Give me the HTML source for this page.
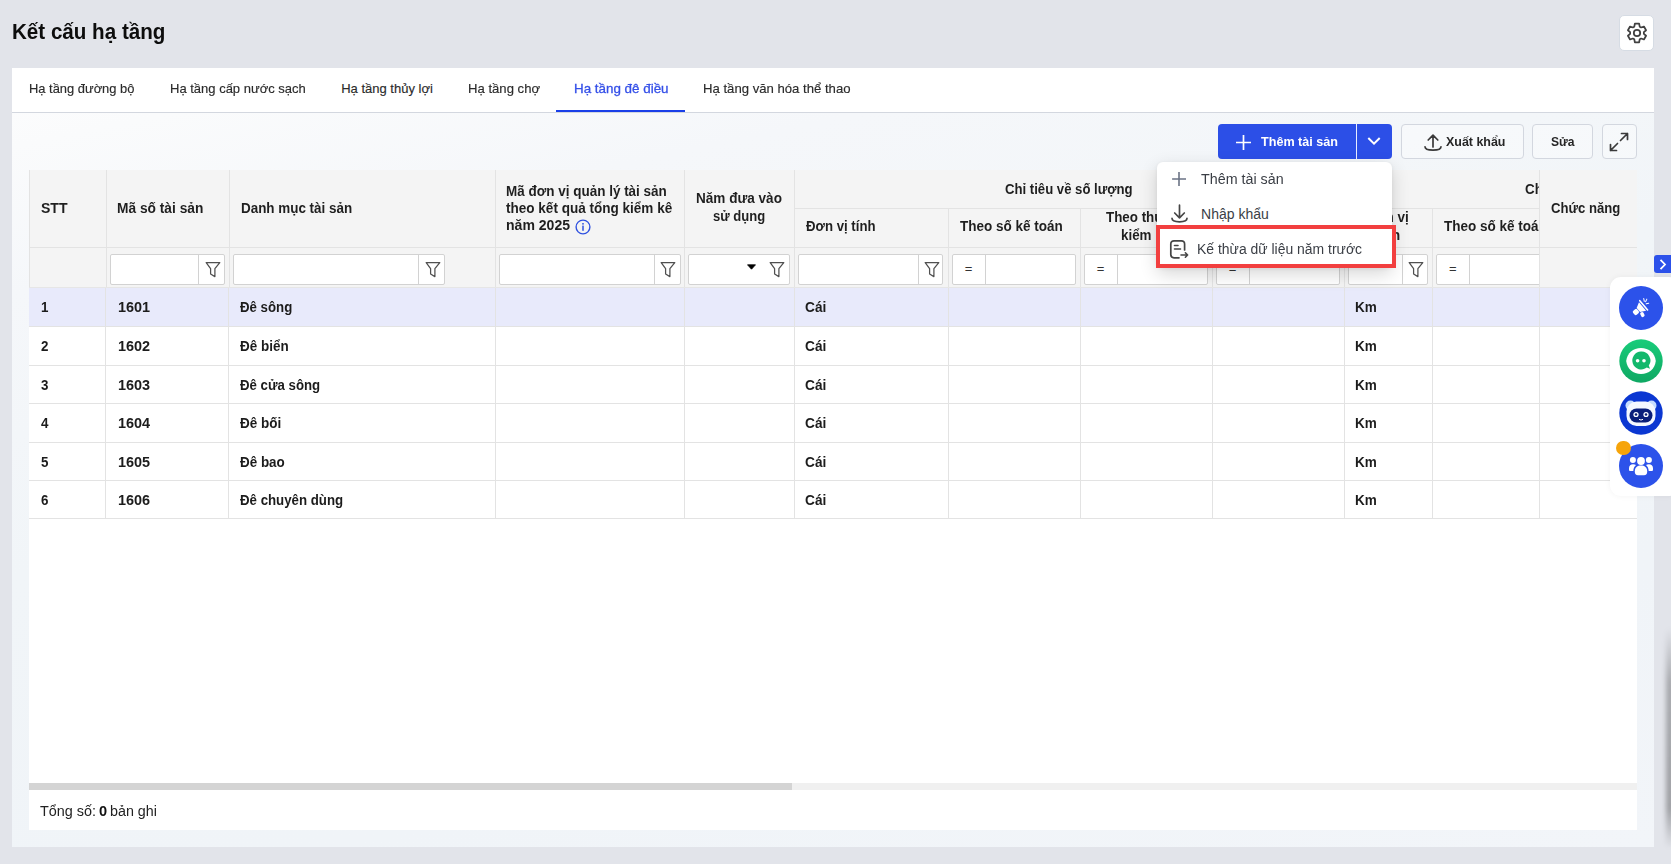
<!DOCTYPE html>
<html><head><meta charset="utf-8"><title>Kết cấu hạ tầng</title>
<style>
html,body{margin:0;padding:0;width:1671px;height:864px;overflow:hidden;}
body{position:relative;background:#e2e4ea;font-family:"Liberation Sans", sans-serif;}
#bg{position:absolute;left:0;top:0;width:1671px;height:864px;background:#e2e4ea;}
.m{position:absolute;white-space:nowrap;line-height:1;transform-origin:0 0;}
svg{position:absolute;}
</style></head><body>
<div id="bg"></div>
<span class="m" style="left:11.52px;top:21.38px;font-size:22px;font-weight:700;color:#0d0d0d;transform:scaleX(0.9362);">Kết cấu hạ tầng</span>
<div style="position:absolute;left:1619px;top:15px;width:34.5px;height:35.5px;background:#fff;border:1px solid #d6dce4;border-radius:5px;box-sizing:border-box"></div>
<svg style="left:1625px;top:21px" width="24" height="24" viewBox="0 0 24 24" fill="none" stroke="#404040" stroke-width="1.75" stroke-linejoin="round"><path d="M9.30 5.65 L9.86 2.74 L14.14 2.74 L14.70 5.65 L16.15 6.49 L18.95 5.52 L21.08 9.22 L18.85 11.16 L18.85 12.84 L21.08 14.78 L18.95 18.48 L16.15 17.51 L14.70 18.35 L14.14 21.26 L9.86 21.26 L9.30 18.35 L7.85 17.51 L5.05 18.48 L2.92 14.78 L5.15 12.84 L5.15 11.16 L2.92 9.22 L5.05 5.52 L7.85 6.49Z"/><circle cx="12" cy="12" r="3.2"/></svg>
<div style="position:absolute;left:12px;top:68px;width:1642px;height:779px;background:linear-gradient(168deg,#fdfdfe 0%,#fafbfc 7%,#f5f7fa 20%,#f1f5f8 45%,#f0f4f8 75%,#f2f5f9 100%);"></div>
<div style="position:absolute;left:12px;top:68px;width:1642px;height:44px;background:#fff;"></div>
<div style="position:absolute;left:12px;top:112px;width:1642px;height:1px;background:#d3d7df;"></div>
<span class="m" style="left:29.48px;top:82.00px;font-size:13px;font-weight:400;color:#2b2b2b;transform:scaleX(0.9934);-webkit-text-stroke:0.15px #2b2b2b;">Hạ tầng đường bộ</span>
<span class="m" style="left:170.28px;top:82.00px;font-size:13px;font-weight:400;color:#2b2b2b;transform:scaleX(0.9999);-webkit-text-stroke:0.15px #2b2b2b;">Hạ tầng cấp nước sạch</span>
<span class="m" style="left:341.18px;top:82.00px;font-size:13px;font-weight:400;color:#2b2b2b;transform:scaleX(1.0000);-webkit-text-stroke:0.15px #2b2b2b;">Hạ tầng thủy lợi</span>
<span class="m" style="left:467.68px;top:82.00px;font-size:13px;font-weight:400;color:#2b2b2b;transform:scaleX(1.0089);-webkit-text-stroke:0.15px #2b2b2b;">Hạ tầng chợ</span>
<span class="m" style="left:573.98px;top:82.00px;font-size:13px;font-weight:400;color:#3550e8;transform:scaleX(1.0299);-webkit-text-stroke:0.3px #3550e8;">Hạ tầng đê điều</span>
<span class="m" style="left:702.98px;top:82.00px;font-size:13px;font-weight:400;color:#2b2b2b;transform:scaleX(1.0104);-webkit-text-stroke:0.15px #2b2b2b;">Hạ tầng văn hóa thể thao</span>
<div style="position:absolute;left:556px;top:110px;width:129px;height:2px;background:#1a3fe8;"></div>
<div style="position:absolute;left:29px;top:170px;width:1608px;height:660px;background:#fff;"></div>
<div style="position:absolute;left:29px;top:170px;width:1608px;height:117px;background:#f4f4f4;"></div>
<div style="position:absolute;left:29px;top:170px;width:1px;height:117px;background:#e3e3e3;"></div>
<div style="position:absolute;left:29px;top:247px;width:1608px;height:1px;background:#e3e3e3;"></div>
<div style="position:absolute;left:795px;top:208px;width:744px;height:1px;background:#e3e3e3;"></div>
<div style="position:absolute;left:29px;top:287px;width:1608px;height:1px;background:#e6e6e6;"></div>
<div style="position:absolute;left:106px;top:170px;width:1px;height:117px;background:#e3e3e3;"></div>
<div style="position:absolute;left:229px;top:170px;width:1px;height:117px;background:#e3e3e3;"></div>
<div style="position:absolute;left:495px;top:170px;width:1px;height:117px;background:#e3e3e3;"></div>
<div style="position:absolute;left:684px;top:170px;width:1px;height:117px;background:#e3e3e3;"></div>
<div style="position:absolute;left:794px;top:170px;width:1px;height:117px;background:#e3e3e3;"></div>
<div style="position:absolute;left:1344px;top:170px;width:1px;height:117px;background:#e3e3e3;"></div>
<div style="position:absolute;left:1539px;top:170px;width:1px;height:117px;background:#e3e3e3;"></div>
<div style="position:absolute;left:948px;top:208px;width:1px;height:79px;background:#e3e3e3;"></div>
<div style="position:absolute;left:1080px;top:208px;width:1px;height:79px;background:#e3e3e3;"></div>
<div style="position:absolute;left:1212px;top:208px;width:1px;height:79px;background:#e3e3e3;"></div>
<div style="position:absolute;left:1432px;top:208px;width:1px;height:79px;background:#e3e3e3;"></div>
<div style="position:absolute;left:29px;top:287.5px;width:1608px;height:38.5px;background:#e8eafb;"></div>
<div style="position:absolute;left:29px;top:326px;width:1608px;height:1px;background:#e3e3e3;"></div>
<div style="position:absolute;left:29px;top:365px;width:1608px;height:1px;background:#e3e3e3;"></div>
<div style="position:absolute;left:29px;top:403px;width:1608px;height:1px;background:#e3e3e3;"></div>
<div style="position:absolute;left:29px;top:442px;width:1608px;height:1px;background:#e3e3e3;"></div>
<div style="position:absolute;left:29px;top:480px;width:1608px;height:1px;background:#e3e3e3;"></div>
<div style="position:absolute;left:29px;top:518px;width:1608px;height:1px;background:#e3e3e3;"></div>
<div style="position:absolute;left:105px;top:288px;width:1px;height:230px;background:#e3e3e3;"></div>
<div style="position:absolute;left:228px;top:288px;width:1px;height:230px;background:#e3e3e3;"></div>
<div style="position:absolute;left:495px;top:288px;width:1px;height:230px;background:#e3e3e3;"></div>
<div style="position:absolute;left:684px;top:288px;width:1px;height:230px;background:#e3e3e3;"></div>
<div style="position:absolute;left:794px;top:288px;width:1px;height:230px;background:#e3e3e3;"></div>
<div style="position:absolute;left:948px;top:288px;width:1px;height:230px;background:#e3e3e3;"></div>
<div style="position:absolute;left:1080px;top:288px;width:1px;height:230px;background:#e3e3e3;"></div>
<div style="position:absolute;left:1212px;top:288px;width:1px;height:230px;background:#e3e3e3;"></div>
<div style="position:absolute;left:1344px;top:288px;width:1px;height:230px;background:#e3e3e3;"></div>
<div style="position:absolute;left:1432px;top:288px;width:1px;height:230px;background:#e3e3e3;"></div>
<div style="position:absolute;left:1539px;top:288px;width:1px;height:230px;background:#e3e3e3;"></div>
<span class="m" style="left:41.04px;top:201.15px;font-size:14px;font-weight:700;color:#1f1f1f;transform:scaleX(1.0025);">STT</span>
<span class="m" style="left:117.44px;top:200.95px;font-size:14px;font-weight:700;color:#1f1f1f;transform:scaleX(0.9818);">Mã số tài sản</span>
<span class="m" style="left:240.74px;top:200.95px;font-size:14px;font-weight:700;color:#1f1f1f;transform:scaleX(0.9586);">Danh mục tài sản</span>
<span class="m" style="left:506.34px;top:183.55px;font-size:14px;font-weight:700;color:#1f1f1f;transform:scaleX(0.9624);">Mã đơn vị quản lý tài sản</span>
<span class="m" style="left:506.34px;top:200.55px;font-size:14px;font-weight:700;color:#1f1f1f;transform:scaleX(0.9667);">theo kết quả tổng kiểm kê</span>
<span class="m" style="left:506.34px;top:217.95px;font-size:14px;font-weight:700;color:#1f1f1f;transform:scaleX(1.0030);">năm 2025</span>
<svg style="left:575px;top:218.5px" width="16" height="16" viewBox="0 0 16 16"><circle cx="8" cy="8" r="6.9" fill="none" stroke="#2f51e0" stroke-width="1.4"/><rect x="7.25" y="6.6" width="1.5" height="5.2" fill="#2f51e0"/><rect x="7.25" y="4" width="1.5" height="1.6" fill="#2f51e0"/></svg>
<span class="m" style="left:696.14px;top:191.45px;font-size:14px;font-weight:700;color:#1f1f1f;transform:scaleX(0.9683);">Năm đưa vào</span>
<span class="m" style="left:713.14px;top:208.75px;font-size:14px;font-weight:700;color:#1f1f1f;transform:scaleX(0.9320);">sử dụng</span>
<span class="m" style="left:1005.34px;top:182.35px;font-size:14px;font-weight:700;color:#1f1f1f;transform:scaleX(0.9384);">Chỉ tiêu về số lượng</span>
<span class="m" style="left:805.54px;top:219.35px;font-size:14px;font-weight:700;color:#1f1f1f;transform:scaleX(0.9428);">Đơn vị tính</span>
<span class="m" style="left:959.64px;top:219.35px;font-size:14px;font-weight:700;color:#1f1f1f;transform:scaleX(0.9647);">Theo số kế toán</span>
<span class="m" style="left:1105.74px;top:209.75px;font-size:14px;font-weight:700;color:#1f1f1f;transform:scaleX(0.955);">Theo thực tế</span>
<span class="m" style="left:1121.04px;top:227.65px;font-size:14px;font-weight:700;color:#1f1f1f;transform:scaleX(0.955);">kiểm kê</span>
<span class="m" style="left:1233.44px;top:209.75px;font-size:14px;font-weight:700;color:#1f1f1f;transform:scaleX(0.955);">Chênh lệch</span>
<span class="m" style="left:1366.44px;top:210.45px;font-size:14px;font-weight:700;color:#1f1f1f;transform:scaleX(0.9668);">Đơn vị</span>
<span class="m" style="left:1374.44px;top:227.75px;font-size:14px;font-weight:700;color:#1f1f1f;transform:scaleX(1.0181);">tính</span>
<div style="position:absolute;left:1433px;top:171px;width:106px;height:76px;overflow:hidden">
<span class="m" style="left:91.94px;top:10.75px;font-size:14px;font-weight:700;color:#1f1f1f;transform:scaleX(0.955);">Chỉ tiêu về giá trị</span>
<span class="m" style="left:10.54px;top:48.15px;font-size:14px;font-weight:700;color:#1f1f1f;transform:scaleX(0.9647);">Theo số kế toán</span>
</div>
<span class="m" style="left:1550.64px;top:200.55px;font-size:14px;font-weight:700;color:#1f1f1f;transform:scaleX(0.9364);">Chức năng</span>
<div style="position:absolute;left:110.2px;top:254.2px;width:115.3px;height:30.4px;background:#fff;border:1px solid #d2d2d2;border-radius:2px;box-sizing:border-box;"></div>
<div style="position:absolute;left:198.4px;top:254.2px;width:1px;height:30.4px;background:#d2d2d2;"></div>
<svg style="left:204.95px;top:260.8px" width="16" height="17" viewBox="0 0 16 17"><path d="M1.2 1.6H14.8L9.9 7.6V15.6L5.6 13V7.6Z" fill="none" stroke="#505050" stroke-width="1.25" stroke-linejoin="round"/></svg>
<div style="position:absolute;left:232.8px;top:254.2px;width:212.0px;height:30.4px;background:#fff;border:1px solid #d2d2d2;border-radius:2px;box-sizing:border-box;"></div>
<div style="position:absolute;left:418.3px;top:254.2px;width:1px;height:30.4px;background:#d2d2d2;"></div>
<svg style="left:424.55px;top:260.8px" width="16" height="17" viewBox="0 0 16 17"><path d="M1.2 1.6H14.8L9.9 7.6V15.6L5.6 13V7.6Z" fill="none" stroke="#505050" stroke-width="1.25" stroke-linejoin="round"/></svg>
<div style="position:absolute;left:499px;top:254.2px;width:181.5px;height:30.4px;background:#fff;border:1px solid #d2d2d2;border-radius:2px;box-sizing:border-box;"></div>
<div style="position:absolute;left:654px;top:254.2px;width:1px;height:30.4px;background:#d2d2d2;"></div>
<svg style="left:660.25px;top:260.8px" width="16" height="17" viewBox="0 0 16 17"><path d="M1.2 1.6H14.8L9.9 7.6V15.6L5.6 13V7.6Z" fill="none" stroke="#505050" stroke-width="1.25" stroke-linejoin="round"/></svg>
<div style="position:absolute;left:688px;top:254.2px;width:101.5px;height:30.4px;background:#fff;border:1px solid #d2d2d2;border-radius:2px;box-sizing:border-box;"></div>
<svg style="left:747px;top:264px" width="9" height="6" viewBox="0 0 9 6"><path d="M0.5 0.8H8.5L4.5 5.2Z" fill="#000" stroke="#000" stroke-width="0.8" stroke-linejoin="round"/></svg>
<svg style="left:768.5px;top:260.8px" width="16" height="17" viewBox="0 0 16 17"><path d="M1.2 1.6H14.8L9.9 7.6V15.6L5.6 13V7.6Z" fill="none" stroke="#505050" stroke-width="1.25" stroke-linejoin="round"/></svg>
<div style="position:absolute;left:797.6px;top:254.2px;width:145.89999999999998px;height:30.4px;background:#fff;border:1px solid #d2d2d2;border-radius:2px;box-sizing:border-box;"></div>
<div style="position:absolute;left:917.7px;top:254.2px;width:1px;height:30.4px;background:#d2d2d2;"></div>
<svg style="left:923.6px;top:260.8px" width="16" height="17" viewBox="0 0 16 17"><path d="M1.2 1.6H14.8L9.9 7.6V15.6L5.6 13V7.6Z" fill="none" stroke="#505050" stroke-width="1.25" stroke-linejoin="round"/></svg>
<div style="position:absolute;left:952.2px;top:254.2px;width:123.5px;height:30.4px;background:#fff;border:1px solid #d2d2d2;border-radius:2px;box-sizing:border-box;"></div>
<div style="position:absolute;left:985.4px;top:254.2px;width:1px;height:30.4px;background:#d2d2d2;"></div>
<span class="m" style="left:964.78px;top:261.80px;font-size:13px;font-weight:400;color:#333;">=</span>
<div style="position:absolute;left:1084.2px;top:254.2px;width:123.5px;height:30.4px;background:#fff;border:1px solid #d2d2d2;border-radius:2px;box-sizing:border-box;"></div>
<div style="position:absolute;left:1117.4px;top:254.2px;width:1px;height:30.4px;background:#d2d2d2;"></div>
<span class="m" style="left:1096.78px;top:261.80px;font-size:13px;font-weight:400;color:#333;">=</span>
<div style="position:absolute;left:1216.2px;top:254.2px;width:123.5px;height:30.4px;background:#fff;border:1px solid #d2d2d2;border-radius:2px;box-sizing:border-box;"></div>
<div style="position:absolute;left:1249.4px;top:254.2px;width:1px;height:30.4px;background:#d2d2d2;"></div>
<span class="m" style="left:1228.78px;top:261.80px;font-size:13px;font-weight:400;color:#333;">=</span>
<div style="position:absolute;left:1348.2px;top:254.2px;width:79.79999999999995px;height:30.4px;background:#fff;border:1px solid #d2d2d2;border-radius:2px;box-sizing:border-box;"></div>
<div style="position:absolute;left:1402px;top:254.2px;width:1px;height:30.4px;background:#d2d2d2;"></div>
<svg style="left:1408.0px;top:260.8px" width="16" height="17" viewBox="0 0 16 17"><path d="M1.2 1.6H14.8L9.9 7.6V15.6L5.6 13V7.6Z" fill="none" stroke="#505050" stroke-width="1.25" stroke-linejoin="round"/></svg>
<div style="position:absolute;left:1433px;top:250px;width:106px;height:37px;overflow:hidden">
<div style="position:absolute;left:3.2px;top:4.2px;width:130px;height:30.4px;background:#fff;border:1px solid #d2d2d2;border-radius:2px;box-sizing:border-box;"></div>
<div style="position:absolute;left:36.4px;top:4.2px;width:1px;height:30.4px;background:#d2d2d2"></div>
<span class="m" style="left:15.98px;top:11.80px;font-size:13px;font-weight:400;color:#333;">=</span>
</div>
<span class="m" style="left:40.94px;top:299.95px;font-size:14px;font-weight:700;color:#1c1c1c;transform:scaleX(0.955);">1</span>
<span class="m" style="left:117.64px;top:299.95px;font-size:14px;font-weight:700;color:#1c1c1c;transform:scaleX(1.0309);">1601</span>
<span class="m" style="left:240.04px;top:299.95px;font-size:14px;font-weight:700;color:#1c1c1c;transform:scaleX(0.9454);">Đê sông</span>
<span class="m" style="left:805.44px;top:299.95px;font-size:14px;font-weight:700;color:#1c1c1c;transform:scaleX(0.9781);">Cái</span>
<span class="m" style="left:1355.14px;top:299.95px;font-size:14px;font-weight:700;color:#1c1c1c;transform:scaleX(0.9671);">Km</span>
<span class="m" style="left:40.94px;top:338.85px;font-size:14px;font-weight:700;color:#1c1c1c;transform:scaleX(0.955);">2</span>
<span class="m" style="left:117.64px;top:338.85px;font-size:14px;font-weight:700;color:#1c1c1c;transform:scaleX(1.0309);">1602</span>
<span class="m" style="left:240.04px;top:338.85px;font-size:14px;font-weight:700;color:#1c1c1c;transform:scaleX(0.9613);">Đê biển</span>
<span class="m" style="left:805.44px;top:338.85px;font-size:14px;font-weight:700;color:#1c1c1c;transform:scaleX(0.9781);">Cái</span>
<span class="m" style="left:1355.14px;top:338.85px;font-size:14px;font-weight:700;color:#1c1c1c;transform:scaleX(0.9671);">Km</span>
<span class="m" style="left:40.94px;top:377.85px;font-size:14px;font-weight:700;color:#1c1c1c;transform:scaleX(0.955);">3</span>
<span class="m" style="left:117.64px;top:377.85px;font-size:14px;font-weight:700;color:#1c1c1c;transform:scaleX(1.0309);">1603</span>
<span class="m" style="left:240.04px;top:377.85px;font-size:14px;font-weight:700;color:#1c1c1c;transform:scaleX(0.9445);">Đê cửa sông</span>
<span class="m" style="left:805.44px;top:377.85px;font-size:14px;font-weight:700;color:#1c1c1c;transform:scaleX(0.9781);">Cái</span>
<span class="m" style="left:1355.14px;top:377.85px;font-size:14px;font-weight:700;color:#1c1c1c;transform:scaleX(0.9671);">Km</span>
<span class="m" style="left:40.94px;top:416.35px;font-size:14px;font-weight:700;color:#1c1c1c;transform:scaleX(0.955);">4</span>
<span class="m" style="left:117.64px;top:416.35px;font-size:14px;font-weight:700;color:#1c1c1c;transform:scaleX(1.0309);">1604</span>
<span class="m" style="left:240.04px;top:416.35px;font-size:14px;font-weight:700;color:#1c1c1c;transform:scaleX(0.9635);">Đê bối</span>
<span class="m" style="left:805.44px;top:416.35px;font-size:14px;font-weight:700;color:#1c1c1c;transform:scaleX(0.9781);">Cái</span>
<span class="m" style="left:1355.14px;top:416.35px;font-size:14px;font-weight:700;color:#1c1c1c;transform:scaleX(0.9671);">Km</span>
<span class="m" style="left:40.94px;top:454.95px;font-size:14px;font-weight:700;color:#1c1c1c;transform:scaleX(0.955);">5</span>
<span class="m" style="left:117.64px;top:454.95px;font-size:14px;font-weight:700;color:#1c1c1c;transform:scaleX(1.0309);">1605</span>
<span class="m" style="left:240.04px;top:454.95px;font-size:14px;font-weight:700;color:#1c1c1c;transform:scaleX(0.9600);">Đê bao</span>
<span class="m" style="left:805.44px;top:454.95px;font-size:14px;font-weight:700;color:#1c1c1c;transform:scaleX(0.9781);">Cái</span>
<span class="m" style="left:1355.14px;top:454.95px;font-size:14px;font-weight:700;color:#1c1c1c;transform:scaleX(0.9671);">Km</span>
<span class="m" style="left:40.94px;top:493.15px;font-size:14px;font-weight:700;color:#1c1c1c;transform:scaleX(0.955);">6</span>
<span class="m" style="left:117.64px;top:493.15px;font-size:14px;font-weight:700;color:#1c1c1c;transform:scaleX(1.0309);">1606</span>
<span class="m" style="left:240.04px;top:493.15px;font-size:14px;font-weight:700;color:#1c1c1c;transform:scaleX(0.9469);">Đê chuyên dùng</span>
<span class="m" style="left:805.44px;top:493.15px;font-size:14px;font-weight:700;color:#1c1c1c;transform:scaleX(0.9781);">Cái</span>
<span class="m" style="left:1355.14px;top:493.15px;font-size:14px;font-weight:700;color:#1c1c1c;transform:scaleX(0.9671);">Km</span>
<div style="position:absolute;left:29px;top:783px;width:1608px;height:7px;background:#f0f0f0;"></div>
<div style="position:absolute;left:29px;top:783px;width:763px;height:7px;background:#d4d4d4;"></div>
<span class="m" style="left:39.84px;top:803.85px;font-size:14px;font-weight:400;color:#222;transform:scaleX(1.0282);">Tổng số:</span>
<span class="m" style="left:99.04px;top:803.85px;font-size:14px;font-weight:700;color:#111;transform:scaleX(1.0414);">0</span>
<span class="m" style="left:110.34px;top:803.85px;font-size:14px;font-weight:400;color:#222;transform:scaleX(1.0214);">bản ghi</span>
<div style="position:absolute;left:1218px;top:124px;width:174px;height:35px;background:#2c4fe7;border-radius:4px;"></div>
<div style="position:absolute;left:1356px;top:124px;width:1.2px;height:35px;background:#e8ecff;"></div>
<svg style="left:1235px;top:133.5px" width="17" height="17" viewBox="0 0 17 17"><path d="M8.5 1V16M1 8.5H16" stroke="#fff" stroke-width="1.7"/></svg>
<span class="m" style="left:1261.48px;top:135.00px;font-size:13px;font-weight:700;color:#fff;transform:scaleX(0.9694);">Thêm tài sản</span>
<svg style="left:1367px;top:136px" width="14" height="10" viewBox="0 0 14 10"><path d="M1.3 2L7 7.7 12.7 2" fill="none" stroke="#fff" stroke-width="2"/></svg>
<div style="position:absolute;left:1401.3px;top:124.2px;width:122.4px;height:34.6px;border:1px solid #d3d7df;border-radius:4px;box-sizing:border-box;background:rgba(255,255,255,0.35);"></div>
<div style="position:absolute;left:1532.3px;top:124.2px;width:60.5px;height:34.6px;border:1px solid #d3d7df;border-radius:4px;box-sizing:border-box;background:rgba(255,255,255,0.35);"></div>
<div style="position:absolute;left:1602.2px;top:124.2px;width:34.4px;height:34.6px;border:1px solid #d3d7df;border-radius:4px;box-sizing:border-box;background:rgba(255,255,255,0.35);"></div>
<svg style="left:1423px;top:132.5px" width="20" height="19" viewBox="0 0 20 19"><path d="M10 14V2.3M5.2 7 10 2.2 14.8 7M2 13.8C2 18.3 18 18.3 18 13.8" fill="none" stroke="#3a3a3a" stroke-width="1.7" stroke-linecap="round" stroke-linejoin="round"/></svg>
<span class="m" style="left:1446.08px;top:135.00px;font-size:13px;font-weight:700;color:#262626;transform:scaleX(0.9568);">Xuất khẩu</span>
<span class="m" style="left:1550.78px;top:135.00px;font-size:13px;font-weight:700;color:#262626;transform:scaleX(0.9294);">Sửa</span>
<svg style="left:1608px;top:131px" width="22" height="22" viewBox="0 0 22 22"><path d="M12.5 9.5 19.5 2.5M13.5 2.5H19.5V8.5M9.5 12.5 2.5 19.5M2.5 13.5V19.5H8.5" fill="none" stroke="#3a3a3a" stroke-width="1.7" stroke-linecap="round" stroke-linejoin="round"/></svg>
<div style="position:absolute;left:1156.7px;top:161.7px;width:235.3px;height:106px;background:#fff;border-radius:6px;box-shadow:0 6px 18px rgba(0,0,0,0.16),0 1px 4px rgba(0,0,0,0.06);"></div>
<svg style="left:1171px;top:171px" width="16" height="16" viewBox="0 0 16 16"><path d="M8 1.1V15M1.1 8H15" stroke="#6b7385" stroke-width="1.6"/></svg>
<span class="m" style="left:1200.64px;top:172.25px;font-size:14px;font-weight:400;color:#3a3e45;transform:scaleX(1.0208);">Thêm tài sản</span>
<svg style="left:1169.5px;top:204px" width="19" height="20" viewBox="0 0 19 20"><path d="M9.5 1.2V13.8M4.7 9 9.5 13.8 14.3 9M2 14.3C2 19 17 19 17 14.3" fill="none" stroke="#454545" stroke-width="1.7" stroke-linecap="round" stroke-linejoin="round"/></svg>
<span class="m" style="left:1201.04px;top:207.25px;font-size:14px;font-weight:400;color:#3a3e45;transform:scaleX(1.0000);">Nhập khẩu</span>
<svg style="left:1169px;top:239px" width="21" height="21" viewBox="0 0 21 21"><path d="M15.6 11V5C15.6 3 14.4 1.8 12.4 1.8H5C3 1.8 1.8 3 1.8 5V15.6C1.8 17.6 3 18.8 5 18.8H10" fill="none" stroke="#454545" stroke-width="1.7" stroke-linecap="round"/><path d="M5.5 6.5H9M5.5 10H11.5M12 16H18.6M16.4 13.8 18.6 16 16.4 18.2" fill="none" stroke="#454545" stroke-width="1.6" stroke-linecap="round" stroke-linejoin="round"/></svg>
<span class="m" style="left:1196.54px;top:242.15px;font-size:14px;font-weight:400;color:#3a3e45;transform:scaleX(0.9959);">Kế thừa dữ liệu năm trước</span>
<div style="position:absolute;left:1156px;top:225px;width:240px;height:43px;border:4px solid #f23f3f;box-sizing:border-box;"></div>
<div style="position:absolute;left:1654px;top:255px;width:17px;height:17.7px;background:#2c51ea;border-radius:3px 0 0 3px;"></div>
<svg style="left:1658px;top:257.5px" width="10" height="13" viewBox="0 0 10 13"><path d="M2.5 1.8 7 6.5 2.5 11.2" fill="none" stroke="#fff" stroke-width="1.8"/></svg>
<div style="position:absolute;left:1610.4px;top:277px;width:70px;height:219px;background:#fff;border-radius:11px;box-shadow:0 0 6px rgba(0,0,0,0.05);"></div>
<svg style="left:1619px;top:286px" width="44" height="44" viewBox="0 0 44 44"><circle cx="22" cy="22" r="22" fill="#2c52ea"/>
<g transform="translate(21.3 21.7) scale(0.8) translate(-22 -22)">
<g transform="translate(21.5 23) rotate(-40)" fill="#fff">
<rect x="-10" y="-3.2" width="6.8" height="6.6" rx="2"/>
<path d="M-2.6 -3.2 L4.2 -6.8 L4.2 7 L-2.6 3.4Z"/>
<rect x="5.2" y="-8.6" width="2" height="17.2" rx="1"/>
<rect x="-4" y="4.6" width="4.4" height="6.4" rx="2" transform="rotate(12 -2 4.6)"/>
</g>
<path d="M26.3 10.5 27 14M30.2 11.3 28.6 14.6M32.5 16.4 29.4 17.2" stroke="#fff" stroke-width="1.3" stroke-linecap="round"/>
</g>
</svg>
<svg style="left:1619px;top:339px" width="44" height="44" viewBox="0 0 44 44"><defs><linearGradient id="gg" x1="0" y1="0" x2="0" y2="1"><stop offset="0" stop-color="#19cc7a"/><stop offset="1" stop-color="#0fa863"/></linearGradient></defs>
<circle cx="22" cy="22" r="21.7" fill="url(#gg)"/>
<path d="M7.2 22C8.3 13.8 14 9 22 9C30 9 35.7 13.8 36.8 22C35.7 30.2 30 35 22 35C14 35 8.3 30.2 7.2 22Z" fill="#fff"/>
<path d="M22 12.5A9 9 0 1 0 27.8 28.6L31 29.8 29.8 26.6A9 9 0 0 0 22 12.5Z" fill="#13b86c"/>
<circle cx="18.6" cy="21.8" r="1.8" fill="#fff"/><circle cx="25" cy="21.8" r="1.8" fill="#fff"/>
</svg>
<svg style="left:1619px;top:391px" width="44" height="44" viewBox="0 0 44 44"><circle cx="22" cy="22" r="21.7" fill="#0b37d2"/>
<circle cx="11.5" cy="14.5" r="5" fill="#c5dcff"/><circle cx="32.5" cy="14.5" r="5" fill="#c5dcff"/>
<rect x="7.5" y="10.5" width="29" height="24.5" rx="10" fill="#f4f8ff"/>
<rect x="10.5" y="17.5" width="23" height="14" rx="7" fill="#0a1f7a"/>
<circle cx="17" cy="23.5" r="2.6" fill="#fff"/><circle cx="27" cy="23.5" r="2.6" fill="#fff"/>
<circle cx="17" cy="23.5" r="1.3" fill="#0a1f7a"/><circle cx="27" cy="23.5" r="1.3" fill="#0a1f7a"/>
<path d="M20 28.3Q22 29.8 24 28.3" stroke="#fff" stroke-width="1" fill="none"/>
</svg>
<svg style="left:1619px;top:444px" width="44" height="44" viewBox="0 0 44 44"><circle cx="22" cy="22" r="22" fill="#2c52ea"/>
<g fill="#fff"><circle cx="22" cy="17" r="3.9"/><circle cx="13.9" cy="16" r="3"/><circle cx="29.9" cy="16" r="3"/>
<path d="M15.8 27.5C15.8 23.5 18.5 21.6 22 21.6S28.2 23.5 28.2 27.5C28.2 30.2 27.2 31.2 25 31.2H19C16.8 31.2 15.8 30.2 15.8 27.5Z"/>
<path d="M10 24.3C10 21.5 11.8 20.2 14 20.2 15.2 20.2 16.2 20.5 17 21.1 15.3 22.6 14.4 24.5 14.3 27H11.4C10.5 27 10 26.4 10 25.4Z"/>
<path d="M34 24.3C34 21.5 32.2 20.2 30 20.2 28.8 20.2 27.8 20.5 27 21.1 28.7 22.6 29.6 24.5 29.7 27H32.6C33.5 27 34 26.4 34 25.4Z"/>
</g></svg>
<div style="position:absolute;left:1616.2px;top:440.9px;width:14.6px;height:14.6px;border-radius:50%;background:#f6a40a"></div>
<div style="position:absolute;left:1666px;top:628px;width:9px;height:220px;background:linear-gradient(to bottom,rgba(0,0,0,0) 0%,rgba(0,0,0,0.26) 25%,rgba(0,0,0,0.30) 82%,rgba(0,0,0,0) 100%);filter:blur(2.5px);"></div>
</body></html>
